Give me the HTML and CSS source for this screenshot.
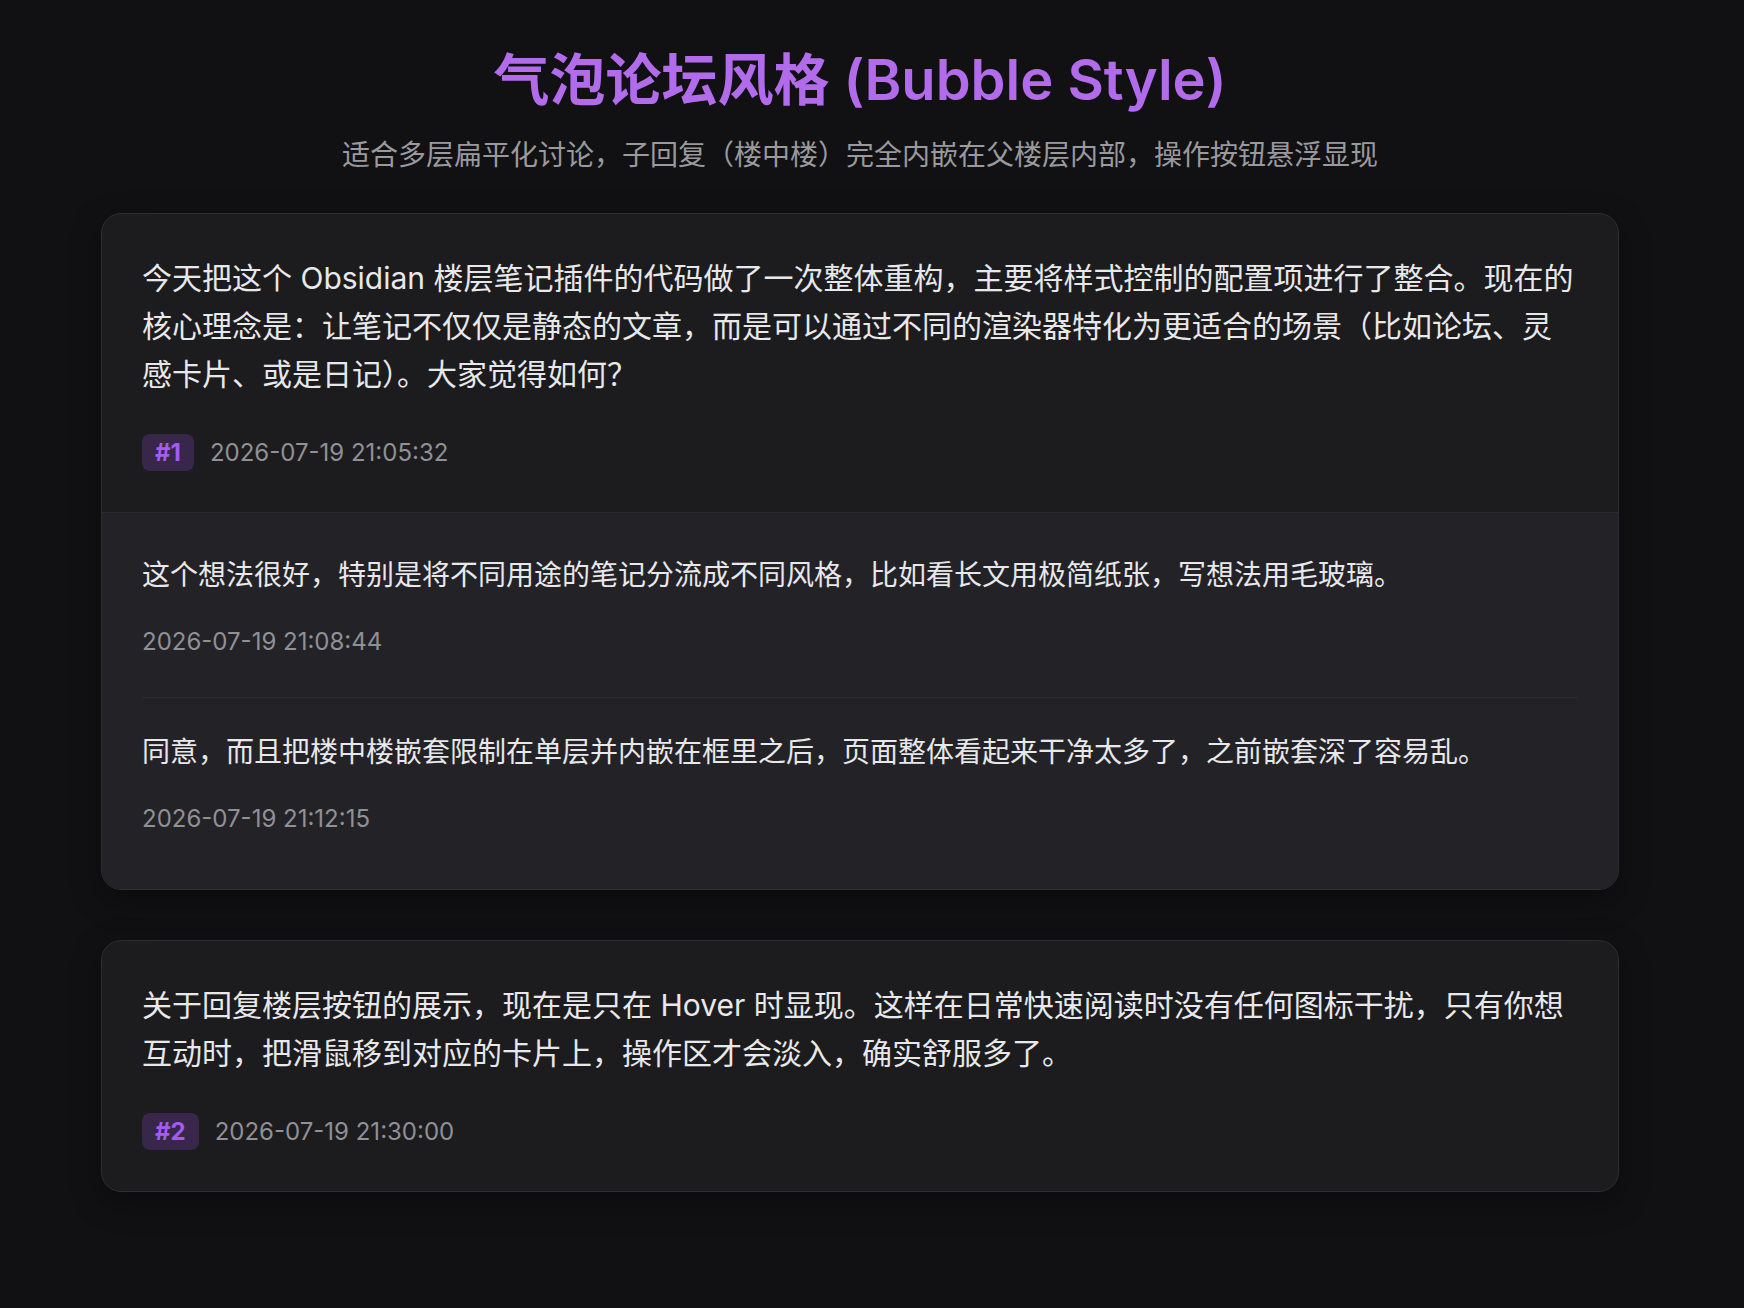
FILE: index.html
```html
<!DOCTYPE html>
<html lang="zh-CN">
<head>
<meta charset="utf-8">
<title>气泡论坛风格 (Bubble Style)</title>
<link rel="stylesheet" href="styles.css">
</head>
<body>
<div class="page">
  <header class="header">
    <h1 class="title">气泡论坛风格 (Bubble Style)</h1>
    <p class="subtitle">适合多层扁平化讨论，子回复（楼中楼）完全内嵌在父楼层内部，操作按钮悬浮显现</p>
  </header>
  <main class="thread">
    <article class="card">
      <div class="post">
        <p class="post-text">今天把这个 Obsidian 楼层笔记插件的代码做了一次整体重构，主要将样式控制的配置项进行了整合。现在的核心理念是：让笔记不仅仅是静态的文章，而是可以通过不同的渲染器特化为更适合的场景（比如论坛、灵感卡片、或是日记）。大家觉得如何？</p>
        <div class="meta">
          <span class="badge">#1</span>
          <span class="date">2026-07-19 21:05:32</span>
        </div>
      </div>
      <div class="replies">
        <div class="reply">
          <p class="reply-text">这个想法很好，特别是将不同用途的笔记分流成不同风格，比如看长文用极简纸张，写想法用毛玻璃。</p>
          <div class="date">2026-07-19 21:08:44</div>
        </div>
        <div class="reply">
          <p class="reply-text">同意，而且把楼中楼嵌套限制在单层并内嵌在框里之后，页面整体看起来干净太多了，之前嵌套深了容易乱。</p>
          <div class="date">2026-07-19 21:12:15</div>
        </div>
      </div>
    </article>
    <article class="card">
      <div class="post">
        <p class="post-text">关于回复楼层按钮的展示，现在是只在 Hover 时显现。这样在日常快速阅读时没有任何图标干扰，只有你想互动时，把滑鼠移到对应的卡片上，操作区才会淡入，确实舒服多了。</p>
        <div class="meta">
          <span class="badge">#2</span>
          <span class="date">2026-07-19 21:30:00</span>
        </div>
      </div>
    </article>
  </main>
</div>
</body>
</html>
```

FILE: styles.css
```css
html, body {
  margin: 0;
  padding: 0;
  background: #111113;
}

body {
  font-family: Inter, "Noto Sans CJK SC", sans-serif;
  color: #e8e8ea;
  min-height: 1308px;
}

.page {
  width: 1720px;
  padding-top: 47px;
  padding-bottom: 60px;
}

.header {
  text-align: center;
}

.title {
  margin: 0;
  font-size: 56px;
  line-height: 66px;
  font-weight: 600;
  color: #b26ceb;
}

.subtitle {
  margin: 21px 0 0;
  font-size: 28px;
  line-height: 42px;
  color: #9a9a9e;
}

.thread {
  width: 1518px;
  margin: 37px auto 0;
  display: flex;
  flex-direction: column;
  gap: 50px;
}

.card {
  background: #1c1c1f;
  border: 1px solid #2e2e32;
  border-radius: 20px;
  overflow: hidden;
  box-shadow: 0 10px 30px rgba(0, 0, 0, 0.35);
}

.post {
  padding: 40px 40px 41px;
}

.post-text {
  margin: 0;
  font-size: 30px;
  line-height: 48px;
  color: #e8e8ea;
}

.reply-text {
  margin: 0;
  font-size: 28px;
  line-height: 45px;
  color: #e8e8ea;
}

.meta {
  margin-top: 36px;
  display: flex;
  align-items: center;
  gap: 16px;
}

.badge {
  display: inline-block;
  height: 37px;
  line-height: 37px;
  padding: 0 13px;
  border-radius: 8px;
  background: #38274b;
  color: #a45bf0;
  font-size: 24px;
  font-weight: 700;
}

.date {
  font-size: 24px;
  line-height: 32px;
  color: #909095;
}

.replies {
  background: #232327;
  border-top: 1px solid #2c2c30;
  padding: 8px 40px 15px;
}

.reply {
  padding: 32px 0 39px;
}

.reply + .reply {
  border-top: 1px solid #2c2c30;
}

.reply .date {
  margin-top: 28px;
}
```
